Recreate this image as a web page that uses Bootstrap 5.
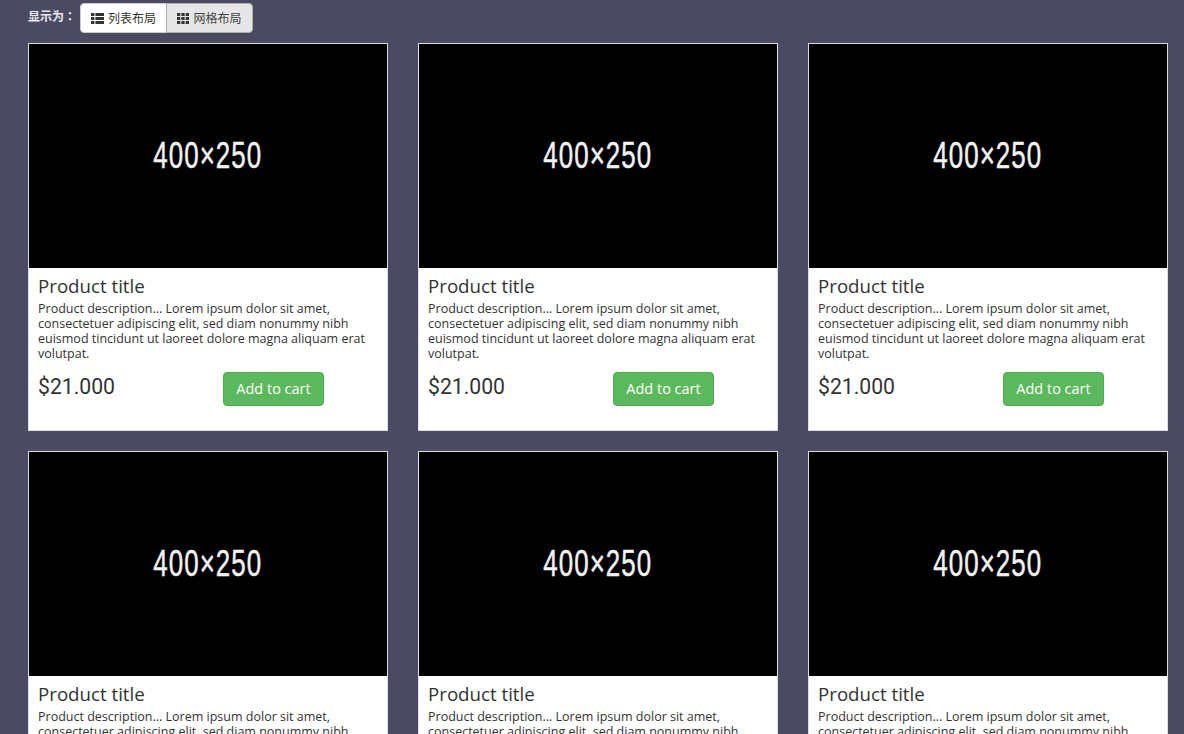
<!DOCTYPE html>
<html lang="zh">
<head>
<meta charset="utf-8">
<title>Products</title>
<link rel="stylesheet" href="https://cdn.jsdelivr.net/npm/bootstrap@5.3.0/dist/css/bootstrap.min.css">
<style>
html,body{height:734px;overflow:hidden}
body{background:#4a4a62;font-family:"Open Sans","Noto Sans CJK SC",sans-serif;color:#333;font-size:14px}
.page-wrap{padding:3px 1px 0 13px}
.view-bar{padding-left:15px;height:30px;margin-bottom:10px}
.view-label{color:#e8e8ee;font-weight:700;font-size:12px;width:52px;line-height:26px;font-family:"Noto Sans CJK TC",sans-serif}
.view-btn{font-size:12px;height:30px;width:87px;padding:0;color:#333;background:#fff;border:1px solid #ccc;line-height:28px;font-family:"Noto Sans CJK SC",sans-serif;--bs-btn-border-radius:4px}
.view-btn.is-on{background:#e6e6e6;border-color:#adadad;color:#444}
.view-btn svg{vertical-align:-1px;margin-right:4px}
.grid-row{--bs-gutter-x:30px;--bs-gutter-y:0;margin:0}
.grid-row>div{width:390px;padding:0 15px}
.prod-card{background:#fff;border:1px solid #ddd;border-radius:0;height:388px;margin-bottom:20px}
.prod-img{height:224px;background:#000;color:#f2f2f2;font-family:"Liberation Sans",sans-serif;font-size:37px;line-height:1;padding-bottom:2px}
.prod-img span{display:inline-block;transform:scaleX(.7);letter-spacing:1.5px;-webkit-text-stroke:.5px #f2f2f2}
.prod-body{padding:8px 9px 0}
.prod-title{font-size:18.7px;line-height:20px;margin:0 0 5px;font-weight:400;color:#333;font-family:"Open Sans",sans-serif}
.prod-desc{font-size:12.5px;line-height:15px;margin:0 0 11px;color:#333}
.buy-row{--bs-gutter-x:30px;margin:0 -15px}
.buy-row>div{width:50%;flex:none;padding:0 15px}
.prod-price{font-size:21.2px;line-height:30px;margin:0;font-weight:400;color:#333;font-family:"Roboto",sans-serif}
.cart-btn{font-size:14.5px;height:34px;width:101px;padding:0;line-height:31px;background:#5cb85c;border-color:#4cae4c;color:#fff;--bs-btn-border-radius:4px;font-family:"Open Sans",sans-serif}
</style>
</head>
<body>
<div class="page-wrap">
  <div class="view-bar d-flex align-items-start">
    <div class="view-label" lang="zh-Hant">显示为：</div>
    <div class="btn-group">
      <button type="button" class="btn view-btn"><svg width="13" height="11" viewBox="0 0 13 11" fill="#333"><path d="M0 0h3.4v3H0zM4.4 0H13v3H4.4zM0 4h3.4v3H0zM4.4 4H13v3H4.4zM0 8h3.4v3H0zM4.4 8H13v3H4.4z"/></svg>列表布局</button>
      <button type="button" class="btn view-btn is-on"><svg width="12" height="11" viewBox="0 0 12 11" fill="#333"><path d="M0 0h3.3v3H0zM4.35 0h3.3v3h-3.3zM8.7 0H12v3H8.7zM0 4h3.3v3H0zM4.35 4h3.3v3h-3.3zM8.7 4H12v3H8.7zM0 8h3.3v3H0zM4.35 8h3.3v3h-3.3zM8.7 8H12v3H8.7z"/></svg>网格布局</button>
    </div>
  </div>
  <div class="d-flex flex-wrap grid-row">
    <div><div class="prod-card"><div class="prod-img d-flex align-items-center justify-content-center"><span>400×250</span></div><div class="prod-body"><h4 class="prod-title">Product title</h4><p class="prod-desc">Product description... Lorem ipsum dolor sit amet, consectetuer adipiscing elit, sed diam nonummy nibh euismod tincidunt ut laoreet dolore magna aliquam erat volutpat.</p><div class="d-flex buy-row"><div><p class="prod-price">$21.000</p></div><div><a class="btn cart-btn" href="#">Add to cart</a></div></div></div></div></div>
    <div><div class="prod-card"><div class="prod-img d-flex align-items-center justify-content-center"><span>400×250</span></div><div class="prod-body"><h4 class="prod-title">Product title</h4><p class="prod-desc">Product description... Lorem ipsum dolor sit amet, consectetuer adipiscing elit, sed diam nonummy nibh euismod tincidunt ut laoreet dolore magna aliquam erat volutpat.</p><div class="d-flex buy-row"><div><p class="prod-price">$21.000</p></div><div><a class="btn cart-btn" href="#">Add to cart</a></div></div></div></div></div>
    <div><div class="prod-card"><div class="prod-img d-flex align-items-center justify-content-center"><span>400×250</span></div><div class="prod-body"><h4 class="prod-title">Product title</h4><p class="prod-desc">Product description... Lorem ipsum dolor sit amet, consectetuer adipiscing elit, sed diam nonummy nibh euismod tincidunt ut laoreet dolore magna aliquam erat volutpat.</p><div class="d-flex buy-row"><div><p class="prod-price">$21.000</p></div><div><a class="btn cart-btn" href="#">Add to cart</a></div></div></div></div></div>
    <div><div class="prod-card"><div class="prod-img d-flex align-items-center justify-content-center"><span>400×250</span></div><div class="prod-body"><h4 class="prod-title">Product title</h4><p class="prod-desc">Product description... Lorem ipsum dolor sit amet, consectetuer adipiscing elit, sed diam nonummy nibh euismod tincidunt ut laoreet dolore magna aliquam erat volutpat.</p><div class="d-flex buy-row"><div><p class="prod-price">$21.000</p></div><div><a class="btn cart-btn" href="#">Add to cart</a></div></div></div></div></div>
    <div><div class="prod-card"><div class="prod-img d-flex align-items-center justify-content-center"><span>400×250</span></div><div class="prod-body"><h4 class="prod-title">Product title</h4><p class="prod-desc">Product description... Lorem ipsum dolor sit amet, consectetuer adipiscing elit, sed diam nonummy nibh euismod tincidunt ut laoreet dolore magna aliquam erat volutpat.</p><div class="d-flex buy-row"><div><p class="prod-price">$21.000</p></div><div><a class="btn cart-btn" href="#">Add to cart</a></div></div></div></div></div>
    <div><div class="prod-card"><div class="prod-img d-flex align-items-center justify-content-center"><span>400×250</span></div><div class="prod-body"><h4 class="prod-title">Product title</h4><p class="prod-desc">Product description... Lorem ipsum dolor sit amet, consectetuer adipiscing elit, sed diam nonummy nibh euismod tincidunt ut laoreet dolore magna aliquam erat volutpat.</p><div class="d-flex buy-row"><div><p class="prod-price">$21.000</p></div><div><a class="btn cart-btn" href="#">Add to cart</a></div></div></div></div></div>
  </div>
</div>
<script src="https://cdn.jsdelivr.net/npm/bootstrap@5.3.0/dist/js/bootstrap.bundle.min.js"></script>
</body>
</html>
